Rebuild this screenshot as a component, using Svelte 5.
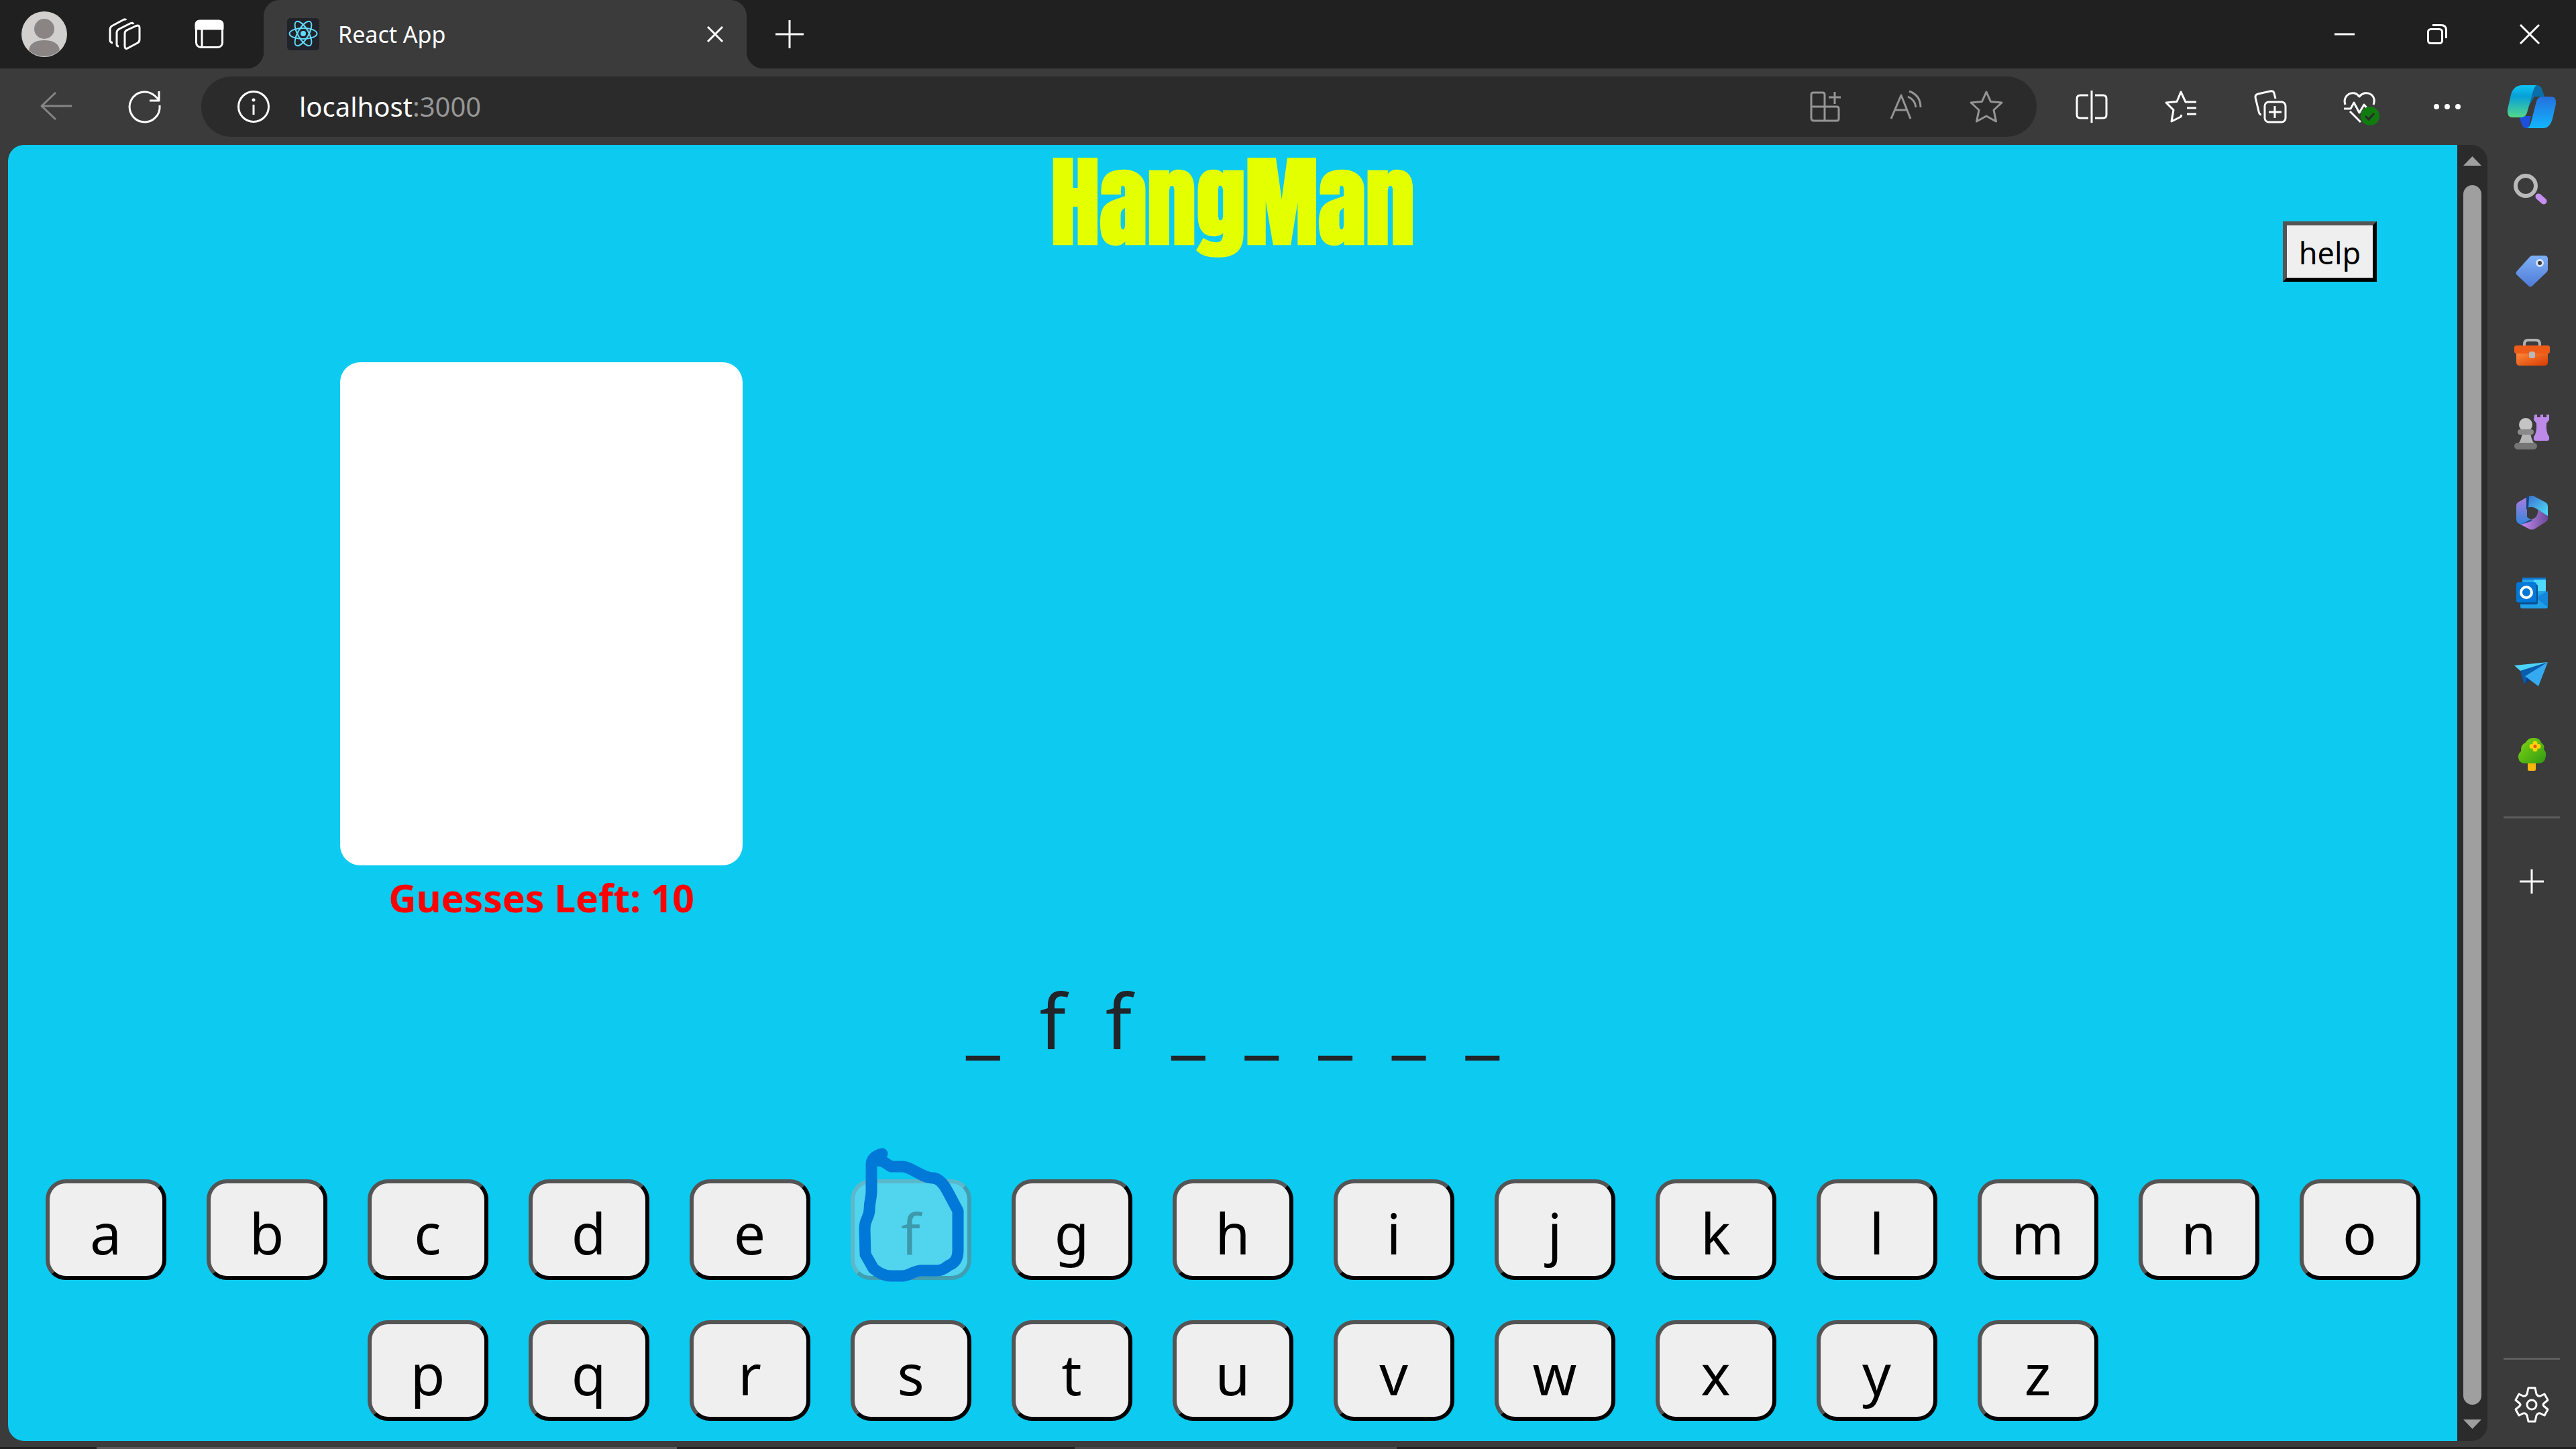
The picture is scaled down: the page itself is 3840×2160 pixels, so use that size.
<script>
  const letters = 'abcdefghijklmnopqrstuvwxyz'.split('');
  const word = ['_', 'f', 'f', '_', '_', '_', '_', '_'];
  let used = $state(['f']);
  let guessesLeft = $state(10);

  function guess(letter) {
    if (used.includes(letter)) return;
    used.push(letter);
    guessesLeft -= 1;
  }
</script>

<div class="browser">
  <header class="tabbar">
    <button class="icon avatar" aria-label="Profile">
      <svg viewBox="0 0 68 68">
        <circle cx="34" cy="34" r="34" fill="#d2d0ce" />
        <circle cx="34" cy="26" r="15" fill="#8a8583" />
        <path d="M11 58c1-11 11-15 23-15s22 4 23 15a34 34 0 0 1-46 0z" fill="#8a8583" />
      </svg>
    </button>
    <button class="icon workspaces" aria-label="Workspaces">
      <svg viewBox="0 0 48 48" class="line">
        <path d="M28 17.500 41 11.500q5-2 5 3v17q0 4-3 5.500L29 44.500q-5 3-5-3V23q0-4 4-5.500z" />
        <path d="M37 9q-1-3-5-1L16 16q-4 2-4 6v17q0 3 3 3" />
        <path d="M26 3q-1-2-4-.5L6 11q-4 2-4 6v16q0 3 4 4" />
      </svg>
    </button>
    <button class="icon panel" aria-label="Tab actions">
      <svg viewBox="0 0 48 48" class="line">
        <rect x="4.500" y="4.500" width="39" height="39" rx="7" />
        <path d="M4 14V10q0-6 6-6h28q6 0 6 6v6H4z" fill="#fff" />
        <path d="M13 15v28" />
      </svg>
    </button>
    <div class="tab">
      <svg class="favicon" viewBox="0 0 48 48">
        <rect width="48" height="48" rx="5" fill="#20232a" />
        <circle cx="24" cy="23" r="4" fill="#61dafb" />
        <g fill="none" stroke="#61dafb" stroke-width="2">
          <ellipse cx="24" cy="23" rx="20.500" ry="8" />
          <ellipse cx="24" cy="23" rx="20.500" ry="8" transform="rotate(60 24 23)" />
          <ellipse cx="24" cy="23" rx="20.500" ry="8" transform="rotate(120 24 23)" />
        </g>
      </svg>
      <span class="tab-title">React App</span>
      <button class="icon small" aria-label="Close tab">
        <svg viewBox="0 0 24 24" class="line"><path d="M1 1l22 22M23 1 1 23" /></svg>
      </button>
    </div>
    <button class="icon new-tab" aria-label="New tab">
      <svg viewBox="0 0 48 48" class="line"><path d="M24 3v42M3 24h42" /></svg>
    </button>
    <div class="window-controls">
      <button class="icon win" aria-label="Minimize">
        <svg viewBox="0 0 30 30" class="line"><path d="M0 15h30" /></svg>
      </button>
      <button class="icon win" aria-label="Restore">
        <svg viewBox="0 0 30 30" class="line">
          <rect x="1.500" y="7.500" width="21" height="21" rx="4" />
          <path d="M8 1.500h13q7.500 0 7.500 7.500v12" />
        </svg>
      </button>
      <button class="icon win" aria-label="Close window">
        <svg viewBox="0 0 30 30" class="line"><path d="M1 1l28 28M29 1 1 29" /></svg>
      </button>
    </div>
  </header>

  <nav class="toolbar" aria-label="Browser toolbar">
    <button class="icon dim" aria-label="Back">
      <svg viewBox="0 0 48 48" class="line"><path d="M23 3 2 23l21 20M2 23h45" /></svg>
    </button>
    <button class="icon reload" aria-label="Reload">
      <svg viewBox="0 0 48 48" class="line"><path d="M46 22a22.500 22.500 0 1 1-7-14l6 6M45 1v14H31" /></svg>
    </button>
    <div class="address">
      <button class="icon" aria-label="Site information">
        <svg viewBox="0 0 48 48" class="line">
          <circle cx="24" cy="24" r="22.500" />
          <path d="M24 21v15" />
          <circle cx="24" cy="14" r="1.500" fill="#fff" stroke-width="2" />
        </svg>
      </button>
      <a class="url" href="http://localhost:3000">localhost<span>:3000</span></a>
      <div class="address-actions">
        <button class="icon faint" aria-label="Add app">
          <svg viewBox="0 0 48 48" class="line">
            <path d="M23 45V6q0-3-3-3H6Q3 3 3 6v35q0 4 4 4h34q3 0 3-3V27q0-3-3-3H3M38 2v18M29 10h18" />
          </svg>
        </button>
        <button class="icon faint" aria-label="Read aloud">
          <svg viewBox="0 0 48 48" class="line">
            <path d="M2 42 17 7l14 35M7 29h19M27 9q11 5 12 16M29 1q17 6 17 24" />
          </svg>
        </button>
        <button class="icon faint" aria-label="Add to favorites">
          <svg viewBox="0 0 48 48" class="line">
            <path d="M24 2l6.500 14.500L47 18 35 29l3.500 17L24 38 9.500 46 13 29 1 18l16.500-1.500z" />
          </svg>
        </button>
      </div>
    </div>
    <div class="toolbar-actions">
      <button class="icon" aria-label="Split screen">
        <svg viewBox="0 0 48 48" class="line">
          <path d="M24 0v48M19 7H7q-5 0-5 5v24q0 5 5 5h12M29 7h12q5 0 5 5v24q0 5-5 5H29" />
        </svg>
      </button>
      <button class="icon" aria-label="Favorites">
        <svg viewBox="0 0 48 48" class="line">
          <path d="M47 17H31L24 2l-6 14.500L2 18l11 11-3 17 14-7 1-3M33 26h14M33 35h14" />
        </svg>
      </button>
      <button class="icon" aria-label="Collections">
        <svg viewBox="0 0 48 48" class="line">
          <rect x="16" y="17" width="31" height="30" rx="6" />
          <path d="M31 23v18M22 32h19M11 36q-3 0-4-5L2 10q0-4 4-5l18-4q5-1 6 3l2 8" />
        </svg>
      </button>
      <button class="icon health" aria-label="Browser essentials">
        <svg viewBox="0 0 58 54">
          <g class="line">
            <path d="M3 21C-2 7 15-3 24 9 34-3 51 7 45 21M1 27h10l5-9 8 15 7-12 5 6M10 31l16 16" />
          </g>
          <circle cx="40" cy="38" r="14" fill="#107c10" />
          <path d="M33 38l5 5 8-9" fill="none" stroke="#2b2b2b" stroke-width="3" />
        </svg>
      </button>
      <button class="icon" aria-label="Settings and more">
        <svg viewBox="0 0 48 48" fill="#fff">
          <circle cx="6" cy="24" r="4" /><circle cx="22" cy="24" r="4" /><circle cx="38" cy="24" r="4" />
        </svg>
      </button>
    </div>
    <button class="icon copilot" aria-label="Copilot">
      <svg viewBox="0 0 72 66">
        <defs>
          <linearGradient id="cpA" x1="0" y1="0" x2="0" y2="1">
            <stop offset="0" stop-color="#0fc4f2" /><stop offset=".35" stop-color="#079fd8" /><stop offset="1" stop-color="#55d98a" />
          </linearGradient>
          <linearGradient id="cpB" x1="0" y1="0" x2="0" y2="1">
            <stop offset="0" stop-color="#2470dc" /><stop offset="1" stop-color="#12b5ff" />
          </linearGradient>
        </defs>
        <path d="M20 1h24q6 0 8 8l3 9H40l-8 14z" fill="#0a6fa8" />
        <path d="M17 47h18l-4 18h-4q-4 0-6-6z" fill="#1d4fd8" />
        <path d="M22 1h21q-3 2-5 9l-9 32q-2 7-9 7H7q-8 0-7-12l5-22Q9 1 22 1z" fill="url(#cpA)" />
        <path d="M52 18h13q8 0 7 11l-5 22q-4 14-14 14H29q4-2 6-9l8-31q2-7 9-7z" fill="url(#cpB)" />
      </svg>
    </button>
  </nav>

  <div class="content">
    <div class="viewport">
      <main class="page">
        <div class="heading">
          <h1>HangMan</h1>
          <button class="help">help</button>
        </div>
        <section class="gallows">
          <div class="canvas"></div>
          <p>Guesses Left: {guessesLeft}</p>
        </section>
        <p class="word">
          {#each word as ch}<span>{ch}</span>{/each}
        </p>
        <div class="keys">
          {#each letters as letter}
            <div class="slot">
              <button class="key" disabled={used.includes(letter)} onclick={() => guess(letter)}>{letter}</button>
              {#if letter === 'f'}
                <svg class="ink" viewBox="0 -50 180 210" aria-hidden="true">
                  <path d="M47-38Q30-34 31-20V17C31 30 28 32 28 45 28 58 21 58 21 74L22 112 34 133Q47 144 60 144H77C88 144 94 136 105 136H129C140 136 143 129 149 127Q160 122 160 106V47L144 17Q134-2 122-2C107-2 90-19 77-19H60L48-27 34-29" />
                </svg>
              {/if}
            </div>
          {/each}
        </div>
      </main>
      <div class="scrollbar" aria-hidden="true">
        <svg viewBox="0 0 27 14"><path d="M0 14 13.500 0 27 14z" /></svg>
        <div class="thumb"></div>
        <svg viewBox="0 0 27 14"><path d="M0 0h27L13.500 14z" /></svg>
      </div>
    </div>

    <aside class="sidebar" aria-label="Sidebar">
      <button class="icon app" aria-label="Search">
        <svg viewBox="0 0 54 54">
          <path d="M34 33l5 4" stroke="#777" stroke-width="4" />
          <circle cx="18" cy="20" r="15" fill="none" stroke="#b9b9b9" stroke-width="6" />
          <path d="M37 36l8 7" stroke="#c58ff2" stroke-width="9" stroke-linecap="round" />
        </svg>
      </button>
      <button class="icon app" aria-label="Shopping">
        <svg viewBox="0 0 54 54">
          <defs><linearGradient id="tag" x1="0" y1="0" x2="0" y2="1"><stop offset="0" stop-color="#7eb0f5" /><stop offset="1" stop-color="#4f7bd8" /></linearGradient></defs>
          <path d="M28 4h18q5 0 5 5v16q0 2-2 4L28 49q-3 3-6 0L5 33q-3-3 0-6L24 6q2-2 4-2z" fill="url(#tag)" />
          <circle cx="39" cy="15" r="4.500" fill="#3b3b3b" stroke="#d4e2fb" stroke-width="3" />
        </svg>
      </button>
      <button class="icon app" aria-label="Tools">
        <svg viewBox="0 0 54 54">
          <defs><linearGradient id="box" x1="0" y1="0" x2="1" y2="1"><stop offset="0" stop-color="#ff8a3d" /><stop offset="1" stop-color="#d83b01" /></linearGradient></defs>
          <path d="M16 20v-4q0-6 6-6h11q6 0 6 6v4" fill="none" stroke="#b3b3b3" stroke-width="4" />
          <path d="M4 29h47v14q0 5-5 5H9q-5 0-5-5z" fill="url(#box)" />
          <rect x="1" y="18" width="53" height="12" rx="3" fill="#ee5a18" />
          <rect x="23" y="27" width="9" height="10" rx="3" fill="#b9b9b9" />
        </svg>
      </button>
      <button class="icon app" aria-label="Games">
        <svg viewBox="0 0 54 54">
          <path d="M31 1h4v4h5V1h4v4h5V1h4v8l-4 5q-1 14 4 20v3q0 3-3 3H33q-3 0-3-3v-3q5-6 4-20l-4-5z" fill="#bd8aea" />
          <path d="M13 28h12q1 9 5 15H8q4-6 5-15z" fill="#b5b5b5" />
          <circle cx="18" cy="16" r="10" fill="#c4c4c4" />
          <rect x="6" y="23" width="24" height="8" rx="4" fill="#8a8a8a" />
          <rect x="1" y="43" width="34" height="10" rx="5" fill="#757575" />
        </svg>
      </button>
      <button class="icon app" aria-label="Microsoft 365">
        <svg viewBox="0 0 54 54">
          <defs>
            <linearGradient id="mA" x1="0" y1="0" x2="0" y2="1"><stop offset="0" stop-color="#b07be0" /><stop offset="1" stop-color="#2f86dc" /></linearGradient>
            <linearGradient id="mB" x1="0" y1="0" x2="1" y2="1"><stop offset="0" stop-color="#3a6ed0" /><stop offset="1" stop-color="#4fe0f5" /></linearGradient>
            <linearGradient id="mC" x1="0" y1="0" x2="1" y2="0"><stop offset="0" stop-color="#c48af0" /><stop offset="1" stop-color="#6b4a98" /></linearGradient>
          </defs>
          <path d="M6 12 22 3l-2 17v14l8 5-16 7-5-3q-3-2-3-6V18q0-4 2-6z" fill="url(#mA)" />
          <path d="M11 45l17-8q9-3 8-14l15 8v5q0 3-3 5L32 51q-5 3-10 0z" fill="url(#mC)" />
          <path d="M19 21V5l4-2q4-2 8 0l17 9q3 2 3 6v14L35 22q-8-6-16-1z" fill="url(#mB)" />
          <path d="M19 4l4-1-1 17-3 3zM11 45l13-7 5 1z" fill="#12457c" />
        </svg>
      </button>
      <button class="icon app" aria-label="Outlook">
        <svg viewBox="0 0 54 54">
          <rect x="13" y="4" width="35" height="30" rx="2" fill="#28a8ea" />
          <path d="M30 7h18v17H30z" fill="#50d9ff" />
          <path d="M13 4h35v3H13z" fill="#0f78d4" />
          <path d="M10 27h28l13-2v22q0 3-3 3H13q-3 0-3-3z" fill="#1fa0e8" />
          <path d="M51 24v24L33 34z" fill="#1486dc" />
          <rect x="8" y="14" width="28" height="30" rx="3" fill="#0a4f8c" />
          <rect x="4" y="11" width="30" height="30" rx="3" fill="#0078d7" />
          <circle cx="19" cy="26" r="8" fill="none" stroke="#fff" stroke-width="4" />
        </svg>
      </button>
      <button class="icon app" aria-label="Drop">
        <svg viewBox="0 0 54 54">
          <path d="M10 23 51 10 21 35l-5 8z" fill="#0a5cad" />
          <path d="M21 31l-5 12 10-7z" fill="#113f87" />
          <path d="M1 15 51 10 10 23z" fill="#4bd3fb" />
          <path d="M51 10 37 46 17 31z" fill="#35aaf0" />
        </svg>
      </button>
      <button class="icon app" aria-label="Tree">
        <svg viewBox="0 0 54 54">
          <defs><linearGradient id="tree" x1="0" y1="0" x2="1" y2="1"><stop offset="0" stop-color="#82d615" /><stop offset="1" stop-color="#2f9a10" /></linearGradient></defs>
          <rect x="21" y="38" width="12" height="14" rx="2" fill="#f8b50c" />
          <path d="M18 41q-11 0-11-10 0-5 4-8-1-10 7-13 4-8 13-7 8 0 10 7 6 4 4 10 4 4 3 10-1 11-11 11z" fill="url(#tree)" />
          <g fill="#fbd20c"><circle cx="32" cy="11" r="3.500" /><circle cx="32" cy="20" r="3.500" /><circle cx="27" cy="15.500" r="3.500" /><circle cx="37" cy="15.500" r="3.500" /></g>
          <circle cx="32" cy="15.500" r="2.500" fill="#e8541c" />
        </svg>
      </button>
      <hr />
      <button class="icon add" aria-label="Customize sidebar">
        <svg viewBox="0 0 36 36" class="line"><path d="M18 0v36M0 18h36" /></svg>
      </button>
      <hr class="bottom" />
      <button class="icon gear" aria-label="Settings">
        <svg viewBox="0 0 50 54" class="line">
          <path d="M20 2h10l2 9q2 4 6 3l6-3 5 9-6 5q-2 2 0 4l6 5-5 9-6-3q-4-1-6 3l-2 9H20l-2-9q-2-4-6-3l-6 3-5-9 6-5q2-2 0-4l-6-5 5-9 6 3q4 1 6-3z" />
          <circle cx="25" cy="27" r="7" />
        </svg>
      </button>
    </aside>
  </div>
  <div class="taskbar" aria-hidden="true"><span class="first"></span><span class="second"></span></div>
</div>

<style>
  :global(body) {
    background: #3b3b3b;
    font-family: 'Segoe UI', 'Noto Sans', sans-serif;
  }
  .browser {
    display: flex;
    flex-direction: column;
    min-height: 100vh;
    color: #fff;
  }
  .icon {
    flex: none;
    display: block;
    width: 48px;
    height: 48px;
    padding: 0;
    border: 0;
    background: none;
  }
  .icon svg {
    display: block;
    width: 100%;
    height: 100%;
    overflow: visible;
  }
  .line {
    fill: none;
    stroke: #fff;
    stroke-width: 3;
    stroke-linejoin: round;
  }
  .dim .line {
    stroke: #858585;
  }
  .faint .line {
    stroke: #959595;
  }

  .tabbar {
    display: flex;
    align-items: center;
    height: 102px;
    padding: 0 54px 0 32px;
    background: #202020;
  }
  .avatar {
    width: 68px;
    height: 68px;
  }
  .workspaces {
    margin-left: 62px;
  }
  .panel {
    margin: 0 57px 0 78px;
  }
  .tab {
    position: relative;
    display: flex;
    align-items: center;
    box-sizing: border-box;
    width: 720px;
    height: 102px;
    padding: 0 35px;
    border-radius: 24px 24px 0 0;
    background: #3b3b3b;
  }
  .tab::before,
  .tab::after {
    content: '';
    position: absolute;
    bottom: 0;
    width: 24px;
    height: 24px;
  }
  .tab::before {
    right: 100%;
    background: radial-gradient(circle at 0 0, transparent 24px, #3b3b3b 24px);
  }
  .tab::after {
    left: 100%;
    background: radial-gradient(circle at 100% 0, transparent 24px, #3b3b3b 24px);
  }
  .favicon {
    width: 48px;
    height: 48px;
  }
  .tab-title {
    flex: 1;
    margin-left: 28px;
    font-size: 34px;
    line-height: 48px;
  }
  .small {
    width: 24px;
    height: 24px;
  }
  .new-tab {
    margin-left: 40px;
  }
  .window-controls {
    display: flex;
    gap: 108px;
    margin-left: auto;
  }
  .win {
    width: 30px;
    height: 30px;
  }

  .toolbar {
    display: flex;
    align-items: center;
    height: 114px;
    padding: 0 30px 0 60px;
  }
  .reload {
    margin: 0 60px 0 84px;
  }
  .address {
    flex: 1;
    display: flex;
    align-items: center;
    height: 90px;
    padding: 0 51px 0 54px;
    border-radius: 45px;
    background: #2b2b2b;
    box-sizing: border-box;
  }
  .url {
    flex: 1;
    margin-left: 44px;
    color: #fff;
    font-size: 40px;
    line-height: 54px;
    text-decoration: none;
  }
  .url span {
    color: #969696;
  }
  .address-actions {
    display: flex;
    gap: 72px;
  }
  .toolbar-actions {
    display: flex;
    gap: 85px;
    margin: 0 64px 0 58px;
  }
  .health svg {
    width: 58px;
    height: 54px;
  }
  .copilot {
    width: 72px;
    height: 66px;
  }

  .content {
    flex: 1;
    display: flex;
  }
  .viewport {
    flex: 1;
    display: flex;
    margin: 0 0 9px 12px;
  }
  .page {
    flex: 1;
    border-radius: 24px 0 0 24px;
    background: #0dcaf0;
    color: #212529;
  }
  .heading {
    display: grid;
    grid-template-columns: 1fr auto 1fr;
    height: 204px;
  }
  h1 {
    grid-column: 2;
    margin: 0;
    color: #e4ff00;
    font-family: Impact, Anton, 'Roboto Condensed', sans-serif;
    font-size: 146px;
    font-weight: 700;
    line-height: 170px;
  }
  .help {
    justify-self: end;
    align-self: end;
    box-sizing: border-box;
    width: 140px;
    height: 90px;
    margin-right: 120px;
    padding: 3px 0 0;
    border: 6px solid;
    border-color: #545454 #000 #000 #545454;
    background: #efefef;
    color: #000;
    font-family: inherit;
    font-size: 45px;
    line-height: 60px;
  }
  .gallows {
    width: 600px;
    margin: 120px 0 0 13.56%;
  }
  .canvas {
    height: 750px;
    border-radius: 30px;
    background: #fff;
  }
  .gallows p {
    margin: 0;
    color: #f00;
    font-size: 57px;
    font-weight: 700;
    line-height: 96px;
    text-align: center;
    white-space: nowrap;
  }
  .word {
    display: flex;
    justify-content: center;
    gap: 59px;
    margin: 62px 0 136px;
    font-size: 114px;
    line-height: 144px;
  }
  .keys {
    display: flex;
    flex-wrap: wrap;
    justify-content: center;
    gap: 60px;
    padding: 30px 24px;
  }
  .slot {
    position: relative;
  }
  .key {
    display: block;
    box-sizing: border-box;
    width: 180px;
    height: 150px;
    padding: 10px 0 0;
    border: 6px solid;
    border-color: #545454 #000 #000 #545454;
    border-radius: 30px;
    background: #efefef;
    color: #000;
    font-family: inherit;
    font-size: 84px;
    line-height: 120px;
  }
  .key:disabled {
    border-color: rgba(118, 118, 118, 0.3) rgba(32, 32, 32, 0.3) rgba(32, 32, 32, 0.3) rgba(118, 118, 118, 0.3);
    background: rgba(239, 239, 239, 0.3);
    color: rgba(16, 16, 16, 0.3);
  }
  .ink {
    position: absolute;
    left: 0;
    top: -50px;
    width: 180px;
    height: 210px;
    fill: none;
    stroke: #0078d7;
    stroke-width: 17;
    stroke-linecap: round;
    stroke-linejoin: round;
    pointer-events: none;
  }
  .scrollbar {
    display: flex;
    flex-direction: column;
    align-items: center;
    width: 45px;
    padding: 17px 0 18px;
    box-sizing: border-box;
    border-radius: 0 24px 24px 0;
    background: #2b2b2b;
  }
  .scrollbar svg {
    width: 27px;
    height: 14px;
    fill: #9f9f9f;
  }
  .thumb {
    flex: 1;
    width: 27px;
    margin: 29px 0 22px;
    border-radius: 14px;
    background: #9f9f9f;
  }

  .sidebar {
    display: flex;
    flex-direction: column;
    align-items: center;
    gap: 66px;
    width: 132px;
    padding: 41px 0 36px;
    box-sizing: border-box;
  }
  .app {
    width: 54px;
    height: 54px;
  }
  hr {
    width: 84px;
    height: 3px;
    margin: 0;
    border: 0;
    background: #5d5d5d;
  }
  .add {
    width: 36px;
    height: 36px;
    margin-top: 10px;
  }
  .bottom {
    margin-top: auto;
  }
  .gear {
    width: 50px;
    height: 54px;
    margin-top: -26px;
  }
  .taskbar {
    display: grid;
    grid-template-columns: 144fr 865fr 593fr 480fr 1758fr;
    height: 3px;
    background: #202020;
  }
  .first {
    grid-column: 2;
    background: #5a5a5a;
  }
  .second {
    grid-column: 4;
    background: #484848;
  }
</style>
